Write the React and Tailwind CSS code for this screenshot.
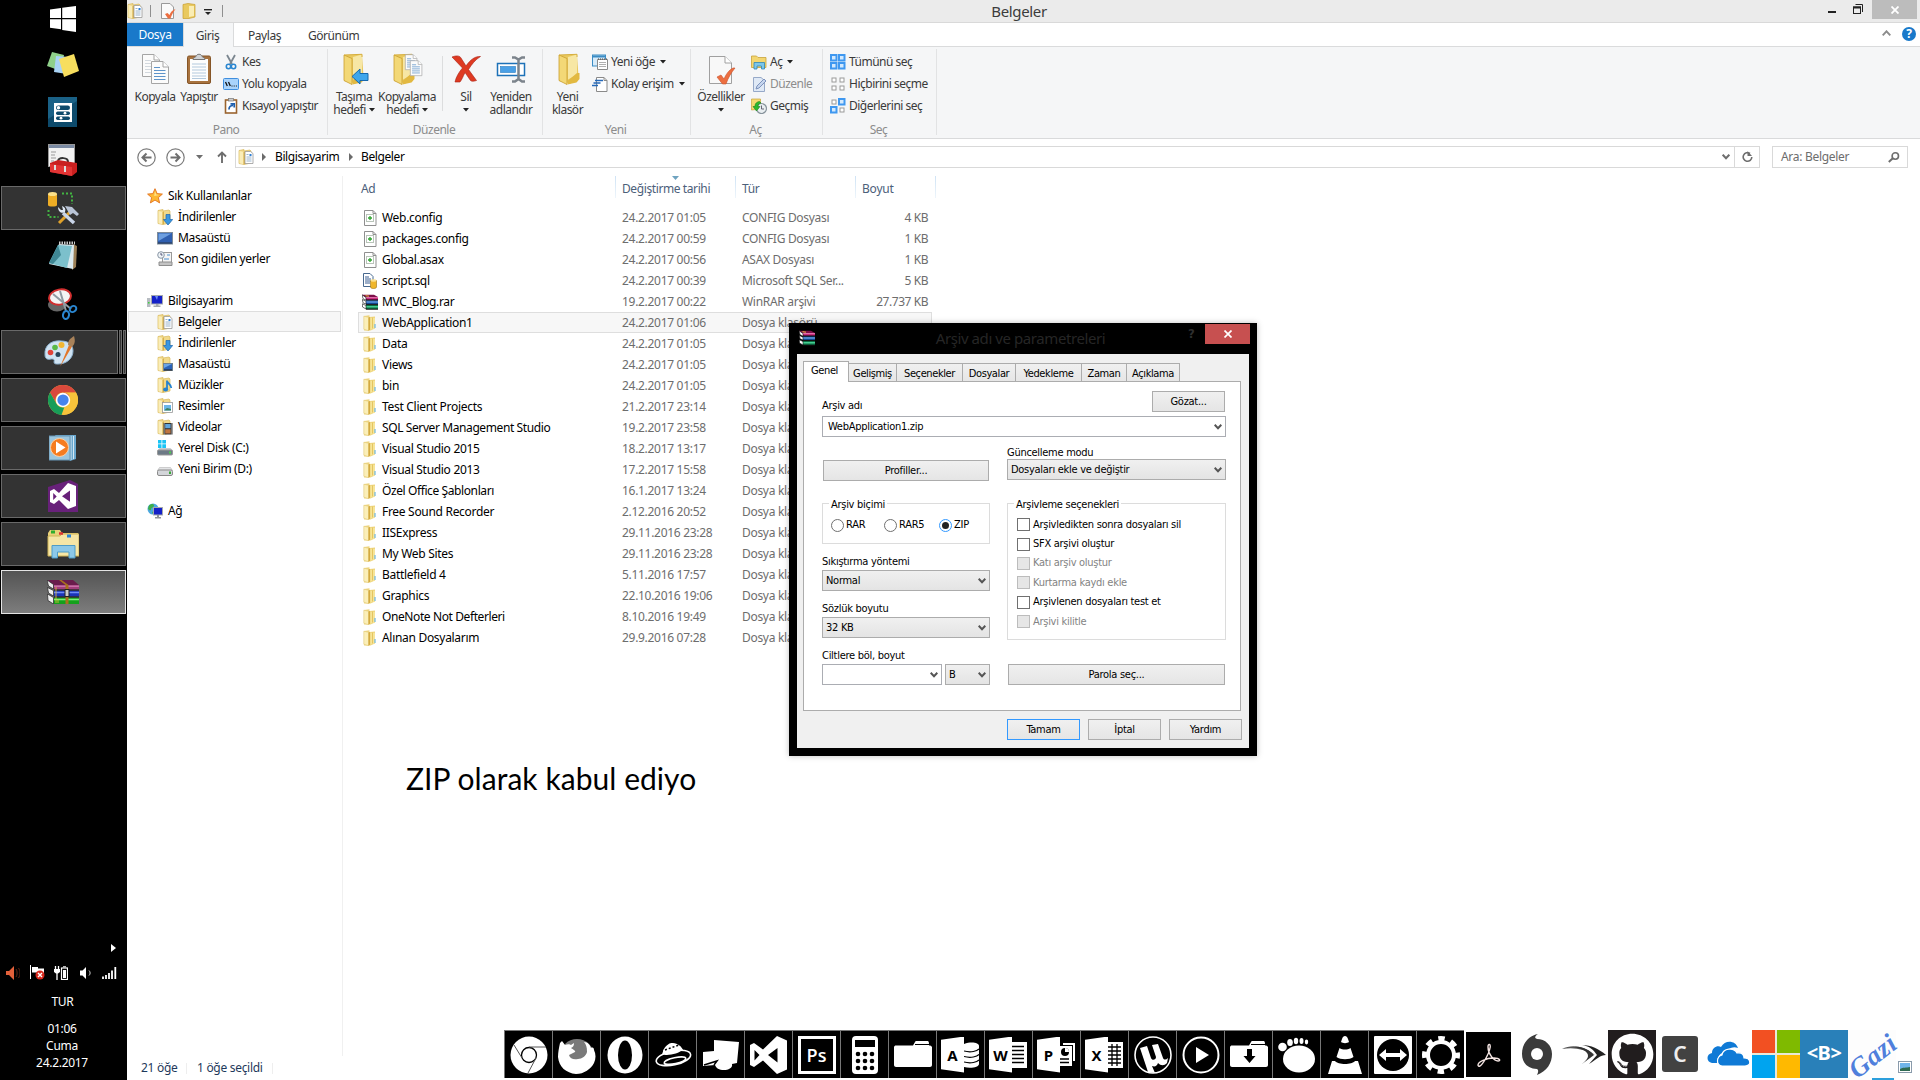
import React from "react";
import { FaGithub } from "react-icons/fa";

const Svg = ({ w = 16, h, vb, children, className = "" }) => (
  <svg width={w} height={h || w} viewBox={vb || `0 0 ${w} ${h || w}`} fill="none" className={`block shrink-0 ${className}`}>
    {children}
  </svg>
);

/* ---------- small icons ---------- */
const FolderBase = () => (
  <>
    <path d="M1 1.500 L6 .5 V2 L12 1 L13 2 V14 L6 15.500 L1 14.500Z" fill="#f1d98a" stroke="#d9b95c" strokeWidth=".7" />
    <path d="M1.500 2 L5.500 3 V15.300 L1.500 14.300Z" fill="#faedb8" />
    <path d="M5.500 3 L7 2.400 V15 L5.500 15.400Z" fill="#d8b04a" />
  </>
);
const FolderBelge = () => (
  <Svg>
    <FolderBase />
    <path d="M7 2.500H12.500L15 4.500V14.500H7Z" fill="#fff" stroke="#9a9a9a" strokeWidth=".8" />
    <path d="M8.500 5.500h2M8.500 8h5M8.500 10h5M8.500 12h5" stroke="#9bb4cc" />
    <rect x="11.500" y="5" width="2" height="2" fill="#2d7fd6" />
  </Svg>
);
const FolderDown = () => (
  <Svg>
    <FolderBase />
    <path d="M9 5.500h4v5h2.700L11 16 6.400 10.500H9Z" fill="#3b97e0" stroke="#1b66b0" strokeWidth=".7" />
  </Svg>
);
const FolderDesk = () => (
  <Svg>
    <FolderBase />
    <rect x="6.500" y="7.500" width="9" height="7" fill="#2a62b8" stroke="#6f8190" />
    <path d="M7 8h8l-8 4z" fill="#6aa5e8" />
    <path d="M7 14h8" stroke="#222" />
  </Svg>
);
const FolderMusic = () => (
  <Svg>
    <FolderBase />
    <path d="M10 3.500v8.500M10 4c1 3 4 3 4.300 7" stroke="#2582cf" strokeWidth="1.800" />
    <ellipse cx="8.600" cy="12.600" rx="2.500" ry="2" fill="#2582cf" />
  </Svg>
);
const FolderPic = () => (
  <Svg>
    <FolderBase />
    <rect x="5.500" y="4.500" width="10" height="10" fill="#fff" stroke="#9a9a9a" strokeWidth=".8" />
    <rect x="7" y="7" width="7" height="5.500" fill="#6bb6e8" />
    <path d="M7 12.500l3-2.500 4 1v1.500z" fill="#3c8061" />
  </Svg>
);
const FolderVideo = () => (
  <Svg>
    <FolderBase />
    <rect x="6.500" y="4" width="9" height="11.500" fill="#333" />
    <rect x="8.200" y="5" width="5.400" height="4.200" fill="#5fa4dc" />
    <rect x="8.200" y="10.300" width="5.400" height="4.200" fill="#c07540" />
    <path d="M7.300 4.500v11M14.700 4.500v11" stroke="#ddd" strokeWidth=".9" strokeDasharray="1 1" />
  </Svg>
);
const FolderRow = () => (
  <Svg>
    <path d="M2 1 L7.500 .3 V2 L13 1.500 V13.500 L8.500 15.500 H2Z" fill="#efd67f" />
    <path d="M1.800 1.200 L6.500 2.300 V15.700 L1.800 14.200Z" fill="#fbefb9" stroke="#e3c978" strokeWidth=".6" />
    <path d="M6.500 2.500 L8 2 V14.700 L6.500 15.700Z" fill="#d3a93f" />
    <path d="M8.500 3h4.500v10.500L8.500 14.500z" fill="#f6e498" />
    <path d="M10.500 2.500v11" stroke="#e4c560" />
    <path d="M13 9v4" stroke="#6fb6dc" strokeWidth="1.200" />
  </Svg>
);
const Star = () => (
  <Svg>
    <path d="M8 .7l2.100 4.900 5.300.5-4 3.500 1.200 5.300L8 12.100l-4.600 2.800 1.200-5.300-4-3.500 5.300-.5z" fill="#fdb833" stroke="#e2701c" strokeWidth=".9" />
    <path d="M8 3l1.200 3.500 3 .5-5 1z" fill="#ffe48a" />
  </Svg>
);
const Desk = () => (
  <Svg>
    <rect x=".5" y="2.500" width="15" height="11.500" fill="#2f5fb0" stroke="#7d8b99" />
    <path d="M1.500 3.500h13L1.500 11z" fill="#6d9fe0" />
    <path d="M1 13h14" stroke="#2b3748" />
  </Svg>
);
const Recent = () => (
  <Svg>
    <rect x="5.500" y="1.500" width="9" height="10" fill="#f5f5f5" stroke="#999" />
    <path d="M7 8h5M10 4h3" stroke="#4d90d0" />
    <path d="M2 11h13v3.500H2z" fill="#c4c4c4" stroke="#8e8e8e" />
    <circle cx="4" cy="4" r="3.300" fill="#eef3f7" stroke="#8a97a5" />
    <path d="M4 2v2h1.500" stroke="#557" />
  </Svg>
);
const Pc = () => (
  <Svg>
    <rect x="0" y="5" width="3.500" height="9" fill="#b7bcc2" />
    <rect x="1" y="9" width="1.500" height="1.500" fill="#3bd13b" />
    <rect x="4.500" y="2.500" width="11" height="8.500" fill="#1420c8" stroke="#a5a9ad" />
    <path d="M8 3h3l-1 4z" fill="#6c8cf4" />
    <path d="M9 11h2.500v1.500h2V14h-7v-1.500H9z" fill="#a5a9ad" />
  </Svg>
);
const DiskC = () => (
  <Svg>
    <path d="M1 0h3.500v3.500H1zM5.300 0H9v3.500H5.300zM1 4.300h3.500V8H1zM5.300 4.300H9V8H5.300z" fill="#19c4f5" />
    <path d="M2.500 8h11l2 2.500H.5z" fill="#c9ccd0" />
    <rect x=".5" y="10" width="15" height="5" rx="1" fill="#6d7a86" stroke="#999" />
    <rect x="12" y="11.500" width="2" height="2" fill="#4fd24f" />
  </Svg>
);
const DiskD = () => (
  <Svg>
    <path d="M2.500 6.500h11l2 3H.5z" fill="#e3e4e6" stroke="#b5b5b5" strokeWidth=".6" />
    <rect x=".5" y="9" width="15" height="5.500" rx="1.500" fill="#d4d6da" stroke="#8b8b8b" />
    <rect x="12" y="10.500" width="2" height="2.500" fill="#39a839" />
  </Svg>
);
const Net = () => (
  <Svg>
    <circle cx="6" cy="6" r="5.500" fill="#4aa7e0" />
    <path d="M2 2.500c2-2 5-2 5 0s-3 2-3 4-3 0-3-1zM5 9c2-1 3 1 1 2.500z" fill="#3fae49" />
    <rect x="6.500" y="4.500" width="9" height="7.500" fill="#1420c8" stroke="#a5a9ad" />
    <path d="M10 12h2v2h2v1.500H8V14h2z" fill="#8f9499" />
  </Svg>
);
const Conf = () => (
  <Svg>
    <path d="M2.500 .5H11L14 3.500V15.500H2.500Z" fill="#fff" stroke="#8f8f8f" />
    <path d="M11 .5V3.500H14" stroke="#8f8f8f" />
    <rect x="4.500" y="4.500" width="7" height="7" fill="#fff" stroke="#b9c4b9" />
    <path d="M8 6v4M6 8h4" stroke="#2fa32f" strokeWidth="1.300" />
  </Svg>
);
const Sql = () => (
  <Svg>
    <path d="M1.500 .5H8L11 3.500V13.500H1.500Z" fill="#fff" stroke="#47688e" />
    <path d="M3 4h4M3 6h6M3 8h6M3 10h5" stroke="#3a5f92" />
    <path d="M8.500 7.500v6.500c0 2 6 2 6 0V7.500z" fill="#f0b62a" stroke="#9c7414" strokeWidth=".6" />
    <ellipse cx="11.500" cy="7.500" rx="3" ry="1.300" fill="#fbe08c" />
  </Svg>
);
const Rar = ({ s = 16 }) => (
  <Svg w={s} vb="0 0 16 16">
    <path d="M0 .8h12L16 3V6H4z" fill="#7c0f48" />
    <path d="M4 3.200h12V5.500H4z" fill="#c8287c" />
    <path d="M4 3.600h12" stroke="#ee8cc0" strokeWidth=".8" />
    <path d="M4 6.200h12v4H4z" fill="#12458f" />
    <path d="M4 8h12" stroke="#69a8f0" strokeWidth="1.300" />
    <path d="M4 10.800h12V15H4z" fill="#0b6a40" />
    <path d="M4 12.800h12" stroke="#4fe0a0" strokeWidth="1.300" />
    <path d="M0 .8l4 2.700v2.700L1 4.700zM.3 5.500L4 7.200v2.900L1 8.800zM.3 9.800L4 11.500V15l-3.500-2z" fill="#fff" stroke="#111" strokeWidth=".6" />
    <path d="M4 6h12M4 10.500h12M4 15.300h12" stroke="#111" strokeWidth=".9" />
    <path d="M3.500 1.700l3.500.5" stroke="#e9b93a" />
  </Svg>
);
const RarBig = () => (
  <Svg w={32} h={24}>
    <path d="M1 0h25l6 5v4H7z" fill="#6a1c4c" />
    <path d="M7 5h25v4.500H7z" fill="#a33d7d" />
    <path d="M7 6.200h25" stroke="#d989b8" />
    <path d="M7 10.500h25v6H7z" fill="#1b34b8" />
    <path d="M7 12.500h25" stroke="#6d8cf8" strokeWidth="1.500" />
    <path d="M7 17.500h25V24H7z" fill="#14a01c" />
    <path d="M7 19.500h25" stroke="#7df07d" strokeWidth="1.500" />
    <path d="M0 0l6.500 4.500v4.500L1.500 6zM.5 7.500l6 3v5.500l-5-3zM.5 14l6 3.500V24l-5.500-3.500z" fill="#eee" stroke="#222" strokeWidth=".7" />
    <path d="M7 10h25M7 17h25" stroke="#111" />
    <path d="M12 0h2.500l7 5v19h-3V5z" fill="#a8701e" />
    <path d="M18 9.500h4v7h-4z" fill="#ccc" stroke="#222" />
    <path d="M9 7v16M11 19v4" stroke="#e9c23a" strokeWidth=".8" />
  </Svg>
);

/* ---------- ribbon icons ---------- */
const Page = ({ x, y, blue }) => (
  <g transform={`translate(${x} ${y})`}>
    <path d="M.5 .5H12L17.500 6V22.500H.5Z" fill="#fbfbfb" stroke="#a5a5a5" />
    <path d="M12 .5V6H17.500" stroke="#a5a5a5" fill="#fff" />
    <path d="M3 6.500h6M3 9.500h11.500M3 12.500h11.500M3 15.500h11.500M3 18.500h11.500" stroke={blue ? "#5d93c9" : "#d2d8de"} strokeWidth="1.100" />
  </g>
);
const CopyBig = () => <Svg w={32}><Page x={3} y={1} /><Page x={12} y={8} blue /></Svg>;
const PasteBig = () => (
  <Svg w={32}>
    <rect x="4.500" y="3" width="23" height="27.500" rx="1.500" fill="#a8733f" stroke="#855527" />
    <rect x="7" y="6" width="18" height="22" fill="#fdfdfd" />
    <path d="M9 11h14M9 14h14M9 17h14M9 20h14M9 23h14M9 25.500h14" stroke="#b3c9dd" />
    <path d="M10 6.500c0-2 2-2 3-3 .5-3 5.500-3 6 0 1 1 3 1 3 3z" fill="#d0d3d6" stroke="#777" />
  </Svg>
);
const Fold = ({ x = 4 }) => (
  <g transform={`translate(${x} 0)`}>
    <path d="M2 2l18-.5 1.500 22-8 7L2 28z" fill="#e9c95f" />
    <path d="M11 4l9-2.500v20l-9 5z" fill="#f7e7a4" />
    <path d="M2 2l8 3.500v26L2 27.500z" fill="#f3d876" stroke="#c99e2e" strokeWidth=".8" />
    <path d="M2 2l18-.7V4" stroke="#d6ae3c" strokeWidth="1" />
    <path d="M20 20h2.500v6l-3 3.500-9 2V28z" fill="#e2b941" />
  </g>
);
const MoveBig = () => (
  <Svg w={32}>
    <Fold />
    <path d="M14 23.500L22 16v4.500h8v7h-8V31z" fill="#3ea6ec" stroke="#1568ad" />
  </Svg>
);
const CopyToBig = () => (
  <Svg w={32}>
    <Fold x={1} />
    <g transform="translate(14 0) scale(.68)"><Page x={0} y={2} blue /></g>
    <g transform="translate(19 6) scale(.68)"><Page x={0} y={2} blue /></g>
  </Svg>
);
const DelBig = () => (
  <Svg w={32}>
    <path d="M2 4c5-2 8-1 9 1l5 8c4-6 9-10 14.500-9.500-5 3-9 8-12 13l8 11c-3 1-5 1-6 0l-5.500-8c-2 4-3 7-5 9.500H5c1-5 4-10 7.500-14z" fill="#de3a22" stroke="#a81f10" strokeWidth=".6" />
  </Svg>
);
const RenameBig = () => (
  <Svg w={32}>
    <rect x="2.500" y="10.500" width="27" height="12" fill="#fff" stroke="#1d72b8" strokeWidth="1.500" />
    <rect x="5.500" y="13.500" width="15" height="6" fill="#4aa0e6" stroke="#2b7cc0" strokeWidth=".6" />
    <path d="M17 4.500h3l3.500 2 3.500-2h3M23.500 6v20M17 28.500h3l3.500-2.500 3.500 2.500h3" stroke="#7c848c" strokeWidth="2.500" />
  </Svg>
);
const NewFolderBig = () => <Svg w={32}><Fold x={5} /></Svg>;
const PropsBig = () => (
  <Svg w={32}>
    <path d="M4.500 3.500H20L26.500 10V30.500H4.500Z" fill="#f8f8f8" stroke="#a0a0a0" />
    <path d="M20 3.500V10H26.500" fill="#fff" stroke="#a0a0a0" />
    <path d="M12 24l4-2 3 4c2-5 5-9 9-11h2c-4 5-7 10-9 16h-3.500z" fill="#ec6e40" stroke="#c9512a" strokeWidth=".6" />
  </Svg>
);
const Cut = () => (
  <Svg>
    <path d="M4 1l5 9M12 1L7 10" stroke="#7b868f" strokeWidth="1.800" />
    <circle cx="5.500" cy="12.500" r="2.200" stroke="#2a86d0" strokeWidth="1.600" />
    <circle cx="10.500" cy="12.500" r="2.200" stroke="#2a86d0" strokeWidth="1.600" />
  </Svg>
);
const PathI = () => (
  <Svg>
    <rect x=".5" y="2.500" width="15" height="11" rx="1" fill="#a9d3fb" stroke="#3f8ede" />
    <path d="M2.500 6l1.800 4M5.500 6l1.800 4" stroke="#111" strokeWidth="1.300" />
    <path d="M8.500 10h1M10.700 10h1M12.900 10h1" stroke="#111" strokeWidth="1.200" />
  </Svg>
);
const Shortcut = () => (
  <Svg>
    <rect x="2.500" y="2" width="11" height="13" fill="#fff" stroke="#9a642f" strokeWidth="1.600" />
    <rect x="5.500" y=".5" width="5" height="2.500" fill="#ccc" stroke="#777" strokeWidth=".7" />
    <path d="M6 11.500c0-3 1.500-4 4-4M7.500 5.800h3.700v3.700" stroke="#1d5fae" strokeWidth="1.700" />
  </Svg>
);
const NewItem = () => (
  <Svg>
    <rect x=".5" y="1" width="13" height="11" fill="#d7ebf9" stroke="#3b8cc4" />
    <path d="M1 2.500h12" stroke="#3b8cc4" strokeWidth="2" />
    <path d="M5.500 5.500h10v10h-10z" fill="#fff" stroke="#8a8a8a" />
    <path d="M7 8.500h7M7 10.500h7M7 12.500h7" stroke="#b0b0b0" />
    <path d="M6 5h9" stroke="#444" strokeDasharray="1 1" />
  </Svg>
);
const Easy = () => (
  <Svg>
    <path d="M4.500 1.500H12L15 4.500V15.500H4.500Z" fill="#fff" stroke="#8a8a8a" />
    <path d="M12 1.500V4.500H15" stroke="#8a8a8a" />
    <path d="M3 4.500h8M1.500 7h7M0 9.500h6" stroke="#2468b8" strokeWidth="1.400" />
  </Svg>
);
const OpenI = () => (
  <Svg>
    <path d="M.5 2h5l1.500 1.500h8v10H.5z" fill="#f3d670" stroke="#c8a33b" strokeWidth=".8" />
    <path d="M3 15V8.500h10.500V15h-3v-3h-4.500v3z" fill="#7cc6ea" stroke="#2f86b8" strokeWidth=".8" />
  </Svg>
);
const EditI = () => (
  <Svg>
    <path d="M2.500 1.500H10L13.500 4.500V15.500H2.500Z" fill="#dfe9f6" stroke="#96a9c8" />
    <path d="M5 13l1-3 7-7 2 2-7 7z" fill="#c5d5ee" stroke="#7d93bd" />
  </Svg>
);
const HistI = () => (
  <Svg>
    <path d="M.5 1h9v10l-9 1z" fill="#f5d970" stroke="#c8a33b" strokeWidth=".7" />
    <circle cx="10.500" cy="10.500" r="5" fill="#e9eef1" stroke="#87939c" strokeWidth="1.200" />
    <path d="M10.500 7.500v3.500h2.500" stroke="#667" />
    <path d="M8.500 3.500C5 4 4 6 4 8.500H2L5.500 13 9 8.500H7c0-2 1-3 3-3.500z" fill="#2eb82e" stroke="#178217" strokeWidth=".6" />
  </Svg>
);
const Sq = ({ x, y, on }) => on ? (
  <rect x={x + 1} y={y + 1} width="5.500" height="5.500" fill="#d3e9fd" stroke="#3f98f0" strokeWidth="2" />
) : (
  <rect x={x + 2} y={y + 2} width="4" height="4" fill="#fff" stroke="#9a9a9a" strokeWidth="1" />
);
const Sel = ({ m }) => (
  <Svg>
    <Sq x={0} y={0} on={m[0]} /><Sq x={8} y={0} on={m[1]} /><Sq x={0} y={8} on={m[2]} /><Sq x={8} y={8} on={m[3]} />
  </Svg>
);

const Tri = () => <Svg w={6} h={4}><path d="M0 0h6L3 3.500z" fill="#222" /></Svg>;

const Big = ({ icon, l1, l2, arrow, className }) => (
  <div className={`flex flex-col items-center pt-[6px] ${className}`}>
    {icon}
    <div className="mt-[5px] flex h-[13px] items-center leading-[13px] whitespace-nowrap">{l1}</div>
    <div className="flex h-[13px] items-center gap-[3px] leading-[13px] whitespace-nowrap">{l2}{arrow && <Tri />}</div>
  </div>
);
const Small = ({ icon, children, arrow, dim }) => (
  <div className={`flex h-[22px] items-center gap-[3px] whitespace-nowrap ${dim ? "text-[#8d8d8d]" : ""}`}>
    {icon}<span>{children}</span>{arrow && <span className="ml-[2px]"><Tri /></span>}
  </div>
);
const Group = ({ name, children, className }) => (
  <div className={`flex h-[91px] flex-col ${className}`}>
    <div className="flex h-[73px]">{children}</div>
    <div className="h-[18px] pr-[2px] text-center leading-[19px] text-[#8c8c8c]">{name}</div>
  </div>
);
const Sep = () => <div className="mt-[2px] h-[86px] w-px bg-[#e2e3e4]" />;

/* ---------- taskbar ---------- */
const TaskIcons = {
  sticky: <Svg w={32} h={26}><path d="M5 1l12 3-3 16L0 15z" fill="#8fd08a" /><path d="M9 5l13 1-2 17-13-2z" fill="#a9d3f5" /><path d="M12 8l15-5 5 17-15 6z" fill="#f7de5e" /></Svg>,
  panel: <Svg w={29} h={30}><rect width="29" height="30" fill="#0d4a6b" /><path d="M0 30V22L29 4V0H0z" fill="#1a6186" /><rect x="6" y="6" width="18" height="19" fill="#fff" /><rect x="8" y="8.500" width="14" height="4.500" rx="2.200" fill="#0d4a6b" /><rect x="8" y="14.500" width="14" height="3.500" rx="1.700" fill="#0d4a6b" /><rect x="8" y="19.500" width="14" height="3.500" rx="1.700" fill="#0d4a6b" /><circle cx="10.500" cy="10.700" r="1.700" fill="#fff" /><circle cx="17" cy="16.200" r="1.400" fill="#fff" /><circle cx="13" cy="21.200" r="1.400" fill="#fff" /></Svg>,
  toolbox: <Svg w={30} h={32}><rect x=".5" y=".5" width="26" height="22" fill="#f2f2f2" stroke="#999" /><path d="M1 2.500h25" stroke="#7a8aa3" strokeWidth="3" /><path d="M3 8h5M3 11h4M3 14h5M3 17h3" stroke="#999" /><path d="M10 17c1-4 10-4 10 1" stroke="#333" strokeWidth="2" /><path d="M2 19l8-3 19 3v9l-5 4-22-4z" fill="#c91f1f" /><path d="M2 20l22 3v9L2 28z" fill="#e23434" /><path d="M7 21v5M17 22v6" stroke="#ddd" strokeWidth="2" /></Svg>,
  tools: <Svg w={32} h={34}><path d="M1 3v11c0 2 9 2 9 0V3z" fill="#eead25" /><ellipse cx="5.500" cy="3" rx="4.500" ry="2" fill="#fce18a" /><path d="M15 2.500h10V13M1.500 19v7h10" stroke="#43b543" strokeWidth="2" strokeDasharray="2 2" /><path d="M12 32L25 19" stroke="#dfa12a" strokeWidth="3" /><path d="M16 22l11 10" stroke="#c9d5e8" strokeWidth="3.500" /><path d="M11 16c0 5 4 7 7 5 1-3 0-5-3-6l1 4-2 0z" fill="#dce6f3" /><path d="M18 15l7 1 7 7-2 2-4-3-3 2z" fill="#b9c4d6" /></Svg>,
  notepad: <Svg w={32} h={30}><path d="M26 3l4 2-1 21-4 3z" fill="#9a7e55" /><path d="M12 3l15 1-1 24-24-5z" fill="#dbe9ee" /><path d="M11 4l14 1-5 22L2 22z" fill="#7cc0cc" /><path d="M11 4l3 10-8 9-4-1z" fill="#3f8794" /><path d="M12 2h16" stroke="#ccc" strokeWidth="3" strokeDasharray="1.500 1" /></Svg>,
  snip: <Svg w={30} h={32}><ellipse cx="9" cy="17" rx="9" ry="6.500" fill="#666" /><ellipse cx="12" cy="9" rx="11" ry="7.500" fill="#f4f4f4" stroke="#d22f2f" strokeWidth="2" transform="rotate(-10 12 9)" /><path d="M5 6l18 15M12 3l6 20" stroke="#909aa2" strokeWidth="2" /><ellipse cx="25" cy="21" rx="3.500" ry="2.800" stroke="#2a86d0" strokeWidth="2" transform="rotate(-35 25 21)" /><ellipse cx="18" cy="27" rx="3" ry="4" stroke="#2a86d0" strokeWidth="2" transform="rotate(10 18 27)" /></Svg>,
  paint: <Svg w={32} h={32}><path d="M1 19C0 9 8 4 17 5c9 0 12 5 12 10 0 7-6 13-15 13-2 0-4 0-4-2 1-3-1-3-3-3-3 1-6 0-6-4z" fill="#cfe3f3" stroke="#8fb3d0" /><circle cx="6.500" cy="16.500" r="2.800" fill="#e0433a" /><circle cx="11" cy="11.500" r="2.800" fill="#58b947" /><circle cx="17.500" cy="9" r="3" fill="#f2b632" /><circle cx="14" cy="18.500" r="2.500" fill="#27455c" /><path d="M16 31l9-22 3 1.500z" fill="#e2762a" /><path d="M24 9c0-5 2-6 6-9 1.500 5 1 8-2 11z" fill="#a8825a" /></Svg>,
  chrome: <Svg w={30} vb="0 0 48 48"><circle cx="24" cy="24" r="24" fill="#f7c33b" /><path d="M3.200 12A24 24 0 0 1 44.800 12H24A12 12 0 0 0 13.600 30z" fill="#d9493c" /><path d="M3.200 12L13.600 30A12 12 0 0 0 26 35.800L21.500 48A24 24 0 0 1 3.200 12z" fill="#189d58" /><path d="M44.800 12H24v12z" fill="#d9493c" /><path d="M44.800 12H24A12 12 0 0 1 34.400 30L24 48A24 24 0 0 0 44.800 12z" fill="#f7c33b" /><circle cx="24" cy="24" r="11.500" fill="#fff" /><circle cx="24" cy="24" r="9" fill="#4684ee" /></Svg>,
  media: <Svg w={27} h={26}><path d="M6 0h21v24l-6 2z" fill="#6aa8cf" /><path d="M24.500 1v23M22 1v24" stroke="#d5e8f4" /><rect x="0" y="1" width="21" height="24" fill="#9cc6de" stroke="#6696b5" /><circle cx="10.500" cy="12.500" r="9" fill="#f57c20" stroke="#fbd0a6" /><path d="M7 6.500l9.500 6L7 18.500z" fill="#fff" /></Svg>,
  vs: <Svg w={30} h={32}><path d="M0 7l22-7 8 4v28H0z" fill="#68217a" /><path d="M20 3l8 3v20l-8 3-9-9-5 4-4-2V11l4-2 5 4zM22 10.500l-8 5.800 8 5.500zM5.200 13v7l3.500-3.500z" fill="#fff" fillRule="evenodd" /></Svg>,
  explorer: <Svg w={32} h={30}><path d="M1 4l2-3h10l2 3h16v22H1z" fill="#e9d27a" /><path d="M1 7h12l2-2h17v22H1z" fill="#f6e6a6" stroke="#cfb457" /><path d="M4 3h4" stroke="#2fae2f" strokeWidth="3" /><path d="M12 4.500h4" stroke="#d33" strokeWidth="2.500" /><path d="M20 7h4" stroke="#2b86d8" strokeWidth="3" /><path d="M5 29V16.500h23V29h-6v-6H10.500v6z" fill="#8cc8e8" stroke="#4f9cc6" /></Svg>,
};
const Task = ({ children, open, active, stack }) => (
  <div className="flex h-[44px] w-[125px]">
    <div className={`flex h-[44px] flex-1 items-center justify-center ${active ? "border border-[#e4e4e4] bg-linear-to-b from-[#545454] to-[#7d7d7d]" : open ? "border border-[#696969] bg-[#333]" : ""} ${stack ? "" : "pr-[2px]"}`}>
      {children}
    </div>
    {stack && <><div className="ml-px w-[3px] border border-[#696969] bg-[#333]" /><div className="ml-px w-[3px] border border-[#696969] bg-[#333]" /></>}
  </div>
);

const Taskbar = () => (
  <div className="flex h-[1080px] w-[127px] shrink-0 flex-col bg-black pl-px text-white">
    <div className="flex h-[42px] justify-center pt-[6px] pr-[3px]">
      <Svg w={26} h={26}><path d="M0 3.600L11 2v10H0zM12.200 1.800L26 0v12H12.200zM0 13.200h11v10L0 21.700zM12.200 13.200H26V26l-13.800-2z" fill="#fff" /></Svg>
    </div>
    <div className="flex flex-col gap-1">
      <Task>{TaskIcons.sticky}</Task>
      <Task>{TaskIcons.panel}</Task>
      <Task>{TaskIcons.toolbox}</Task>
      <Task open>{TaskIcons.tools}</Task>
      <Task>{TaskIcons.notepad}</Task>
      <Task>{TaskIcons.snip}</Task>
      <Task open stack>{TaskIcons.paint}</Task>
      <Task open>{TaskIcons.chrome}</Task>
      <Task open>{TaskIcons.media}</Task>
      <Task open>{TaskIcons.vs}</Task>
      <Task open>{TaskIcons.explorer}</Task>
      <Task active><RarBig /></Task>
    </div>
    <div className="mt-[330px] flex justify-end pr-[11px]"><Svg w={5} h={8}><path d="M0 0l5 4-5 4z" fill="#fff" /></Svg></div>
    <div className="mt-[13px] flex h-[15px] items-center pl-[5px]">
      <Svg w={14} h={14}><path d="M0 5h3l5-5v14L3 9H0z" fill="#e2603a" /><path d="M10 3c1.500 2 1.500 6 0 8M12.500 2c2 3 2 7 0 10" stroke="#5a2415" /></Svg>
      <Svg w={15} h={15} className="ml-[10px]"><path d="M.5 0v14" stroke="#fff" /><path d="M2 2h6v1.500h6V9H8V7.500H2z" fill="#fff" /><circle cx="10" cy="10" r="4.500" fill="#d8281c" /><path d="M8 8l4 4M12 8l-4 4" stroke="#fff" strokeWidth="1.400" /></Svg>
      <Svg w={14} h={14} className="ml-[9px]"><path d="M1.500 0v3M4.500 0v3M3 6v8" stroke="#fff" strokeWidth="1.300" /><path d="M0 3h6v3l-2 1.500H2L0 6z" fill="#fff" /><rect x="7.500" y="2" width="6" height="11.500" stroke="#fff" strokeWidth="1.200" /><path d="M9 .8h3" stroke="#fff" /><rect x="9" y="4" width="3" height="8" fill="#fff" /></Svg>
      <Svg w={12} h={14} className="ml-[12px]"><path d="M0 4.500h2.500L6 1v12L2.500 9.500H0z" fill="#fff" /><path d="M9 4.500c1.500 1.500 1.500 3.500 0 5" stroke="#ccc" /></Svg>
      <Svg w={15} h={12} className="ml-[10px]"><path d="M1 12V9.500M4 12V8M7 12V6M10 12V3.500M13.300 12V0" stroke="#fff" strokeWidth="1.800" /></Svg>
    </div>
    <div className="mt-[13px] pr-[3px] text-center leading-[17px]">TUR</div>
    <div className="mt-[10px] pr-[4px] text-center leading-[17px]"><div>01:06</div><div>Cuma</div><div>24.2.2017</div></div>
  </div>
);

/* ---------- explorer ---------- */
const NavRow = ({ icon, children, top, sel }) => (
  <div className={`flex h-[21px] w-[213px] items-center whitespace-nowrap ${top ? "gap-[5px] pl-[19px]" : "gap-[5px] pl-[29px]"} ${sel ? "bg-[#f7f7f7] outline outline-[#dedede] -outline-offset-1" : ""}`}>
    {icon}<span>{children}</span>
  </div>
);

const files = [
  [Conf, "Web.config", "24.2.2017 01:05", "CONFIG Dosyası", "4 KB"],
  [Conf, "packages.config", "24.2.2017 00:59", "CONFIG Dosyası", "1 KB"],
  [Conf, "Global.asax", "24.2.2017 00:56", "ASAX Dosyası", "1 KB"],
  [Sql, "script.sql", "24.2.2017 00:39", "Microsoft SQL Ser...", "5 KB"],
  [Rar, "MVC_Blog.rar", "19.2.2017 00:22", "WinRAR arşivi", "27.737 KB"],
  [FolderRow, "WebApplication1", "24.2.2017 01:06"],
  [FolderRow, "Data", "24.2.2017 01:05"],
  [FolderRow, "Views", "24.2.2017 01:05"],
  [FolderRow, "bin", "24.2.2017 01:05"],
  [FolderRow, "Test Client Projects", "21.2.2017 23:14"],
  [FolderRow, "SQL Server Management Studio", "19.2.2017 23:58"],
  [FolderRow, "Visual Studio 2015", "18.2.2017 13:17"],
  [FolderRow, "Visual Studio 2013", "17.2.2017 15:58"],
  [FolderRow, "Özel Office Şablonları", "16.1.2017 13:24"],
  [FolderRow, "Free Sound Recorder", "2.12.2016 20:52"],
  [FolderRow, "IISExpress", "29.11.2016 23:28"],
  [FolderRow, "My Web Sites", "29.11.2016 23:28"],
  [FolderRow, "Battlefield 4", "5.11.2016 17:57"],
  [FolderRow, "Graphics", "22.10.2016 19:06"],
  [FolderRow, "OneNote Not Defterleri", "8.10.2016 19:49"],
  [FolderRow, "Alınan Dosyalarım", "29.9.2016 07:28"],
];

const TitleBar = () => (
  <div className="flex h-[23px] border-b border-[#d9d9d9] bg-[#ebebeb]">
    <div className="flex w-[110px] items-center pb-[1px]">
      <FolderBelge />
      <div className="ml-[7px] h-[12px] w-px bg-[#8f8f8f]" />
      <Svg w={16} className="ml-[10px]"><path d="M.5 .5H9L12.500 4V15.500H.5Z" fill="#fafafa" stroke="#999" /><path d="M4 11l2.500-1 2 2c1-3 3-5 6-6-2 3-4 6-5 9.500H7z" fill="#ec6e40" /></Svg>
      <Svg w={16} className="ml-[5px]"><path d="M1 1.500L6 .5l7 1V14l-6 1.500H1z" fill="#e9c95f" stroke="#c99e2e" strokeWidth=".7" /><path d="M7 3h5v10l-5 1z" fill="#faedb4" /></Svg>
      <Svg w={8} h={7} className="ml-[6px] mt-[4px]"><path d="M0 .7h8" stroke="#222" strokeWidth="1.400" /><path d="M1 3h6L4 6z" fill="#222" /></Svg>
      <div className="ml-[10px] h-[12px] w-px shrink-0 bg-[#8f8f8f]" />
    </div>
    <div className="flex-1 pr-[27px] text-center text-[15px] leading-[23px] tracking-[-0.35px] text-[#3c3c3c]">Belgeler</div>
    <div className="flex">
      <Svg w={8} h={3} className="mt-[11px]"><path d="M0 1h8" stroke="#222" strokeWidth="2" /></Svg>
      <Svg w={11} h={11} className="ml-[17px] mt-[4px]"><path d="M2.500 .5H9.500V8" stroke="#222" /><rect x=".5" y="3" width="7" height="6.500" stroke="#222" /><path d="M0 3.500h8" stroke="#222" strokeWidth="2" /></Svg>
      <div className="mr-[3px] ml-[8px] flex h-[19px] w-[45px] items-center justify-center bg-[#bcbcbc]">
        <Svg w={8} h={8}><path d="M.5 .5l7 7M7.500 .5l-7 7" stroke="#fff" strokeWidth="1.800" /></Svg>
      </div>
    </div>
  </div>
);

const Ribbon = () => (
  <>
    <div className="flex h-[24px] border-b border-[#dadbdc] tracking-[-0.45px] text-[#3a3a3a]">
      <div className="h-[23px] w-[56px] bg-[#1979ca] text-center leading-[24px] tracking-[-0.3px] text-white">Dosya</div>
      <div className="h-[24px] w-[51px] border-x border-[#dadbdc] bg-[#f5f6f7] pr-[2px] text-center leading-[26px]">Giriş</div>
      <div className="ml-[14px] w-[60px] leading-[26px]">Paylaş</div>
      <div className="leading-[26px]">Görünüm</div>
      <div className="flex flex-1 items-start justify-end gap-[11px] pt-[4px] pr-[4px]">
        <Svg w={9} h={6} className="mt-[3px]"><path d="M.7 5.300l3.800-4 3.800 4" stroke="#8c8c8c" strokeWidth="1.900" /></Svg>
        <div className="flex h-[14px] w-[14px] items-center justify-center rounded-full bg-[#1979ca] text-[12px] font-bold text-white">?</div>
      </div>
    </div>
    <div className="flex h-[92px] border-b border-[#d9dadb] bg-[#f5f6f7] tracking-[-0.5px] text-[#3a3a3a]">
      <Group name="Pano" className="w-[200px]">
        <Big className="ml-[5px] w-[46px]" icon={<CopyBig />} l1="Kopyala" />
        <Big className="w-[42px]" icon={<PasteBig />} l1="Yapıştır" />
        <div className="ml-[3px] pt-[4px]"><Small icon={<Cut />}>Kes</Small><Small icon={<PathI />}>Yolu kopyala</Small><Small icon={<Shortcut />}>Kısayol yapıştır</Small></div>
      </Group>
      <Sep />
      <Group name="Düzenle" className="w-[214px]">
        <Big className="ml-[3px] w-[46px]" icon={<MoveBig />} l1="Taşıma" l2="hedefi" arrow />
        <Big className="w-[60px]" icon={<CopyToBig />} l1="Kopyalama" l2="hedefi" arrow />
        <div className="mt-[9px] ml-[5px] h-[55px] w-px bg-[#dcddde]" />
        <Big className="ml-[3px] w-[40px]" icon={<DelBig />} l1="Sil" arrow />
        <Big className="w-[50px]" icon={<RenameBig />} l1="Yeniden" l2="adlandır" />
      </Group>
      <Sep />
      <Group name="Yeni" className="w-[147px]">
        <Big className="ml-[3px] w-[43px]" icon={<NewFolderBig />} l1="Yeni" l2="klasör" />
        <div className="ml-[3px] pt-[4px]"><Small icon={<NewItem />} arrow>Yeni öğe</Small><Small icon={<Easy />} arrow>Kolay erişim</Small></div>
      </Group>
      <Sep />
      <Group name="Aç" className="w-[131px]">
        <Big className="ml-[3px] w-[54px]" icon={<PropsBig />} l1="Özellikler" arrow />
        <div className="ml-[3px] pt-[4px]"><Small icon={<OpenI />} arrow>Aç</Small><Small icon={<EditI />} dim>Düzenle</Small><Small icon={<HistI />}>Geçmiş</Small></div>
      </Group>
      <Sep />
      <Group name="Seç" className="w-[113px]">
        <div className="ml-[7px] pt-[4px]"><Small icon={<Sel m={[1, 1, 1, 1]} />}>Tümünü seç</Small><Small icon={<Sel m={[0, 0, 0, 0]} />}>Hiçbirini seçme</Small><Small icon={<Sel m={[0, 1, 1, 0]} />}>Diğerlerini seç</Small></div>
      </Group>
      <Sep />
    </div>
  </>
);

const Crumb = () => <Svg w={4} h={8}><path d="M0 0l4 4-4 4z" fill="#6b6b6b" /></Svg>;
const AddressBar = () => (
  <div className="flex h-[37px] pt-[7px] pr-[12px] pl-[10px]">
    <div className="flex h-[22px] w-[98px] items-center">
      <Svg w={19}><circle cx="9.500" cy="9.500" r="8.700" stroke="#7b7b7b" strokeWidth="1.200" /><path d="M14.500 9.500H5.500M9.500 5.500l-4 4 4 4" stroke="#6e6e6e" strokeWidth="2" /></Svg>
      <Svg w={19} className="ml-[10px]"><circle cx="9.500" cy="9.500" r="8.700" stroke="#7b7b7b" strokeWidth="1.200" /><path d="M4.500 9.500h9M9.500 5.500l4 4-4 4" stroke="#6e6e6e" strokeWidth="2" /></Svg>
      <Svg w={7} h={4} className="ml-[11px]"><path d="M0 0h7L3.500 4z" fill="#6e6e6e" /></Svg>
      <Svg w={10} h={12} className="ml-[14px]"><path d="M5 12V2M1 5.500l4-4 4 4" stroke="#6e6e6e" strokeWidth="1.900" /></Svg>
    </div>
    <div className="flex h-[22px] w-[1525px] items-center border border-[#d9d9d9] pl-[2px] text-black">
      <FolderBelge />
      <div className="ml-[8px]"><Crumb /></div>
      <div className="ml-[9px] w-[66px] tracking-[-0.4px]">Bilgisayarim</div>
      <div className="ml-[8px]"><Crumb /></div>
      <div className="ml-[8px] flex-1 tracking-[-0.4px]">Belgeler</div>
      <Svg w={8} h={6} className="mr-[3px]"><path d="M.7 .7l3.300 3.500 3.300-3.500" stroke="#6e6e6e" strokeWidth="2" /></Svg>
      <div className="ml-[1px] flex h-[20px] w-[25px] items-center justify-center border-l border-[#d9d9d9]">
        <Svg w={11} h={12}><path d="M8 2.500A4.300 4.300 0 1 0 9.800 6" stroke="#6e6e6e" strokeWidth="1.600" /><path d="M5.500 0v5H10z" fill="#6e6e6e" /></Svg>
      </div>
    </div>
    <div className="ml-[12px] flex h-[22px] w-[136px] items-center justify-between border border-[#d9d9d9] pr-[7px] pl-[8px] text-[#6d6d6d]">
      <span>Ara: Belgeler</span>
      <Svg w={12} h={11}><circle cx="7.300" cy="4" r="3.200" stroke="#6e6e6e" strokeWidth="1.600" /><path d="M4.800 6.300L.8 10" stroke="#6e6e6e" strokeWidth="2" /></Svg>
    </div>
  </div>
);

const ColSep = () => <div className="h-[22px] w-px bg-linear-to-b from-[#cfe3f5] to-[#eef5fb]" />;

const Explorer = () => (
  <div className="flex h-[1080px] flex-1 flex-col bg-white">
    <TitleBar />
    <Ribbon />
    <AddressBar />
    <div className="flex h-[880px]">
      <div className="w-[215px] pt-[9px] pl-px tracking-[-0.35px] text-black">
        <NavRow top icon={<Star />}>Sık Kullanılanlar</NavRow>
        <NavRow icon={<FolderDown />}>İndirilenler</NavRow>
        <NavRow icon={<Desk />}>Masaüstü</NavRow>
        <NavRow icon={<Recent />}>Son gidilen yerler</NavRow>
        <div className="h-[21px]" />
        <NavRow top icon={<Pc />}>Bilgisayarim</NavRow>
        <NavRow sel icon={<FolderBelge />}>Belgeler</NavRow>
        <NavRow icon={<FolderDown />}>İndirilenler</NavRow>
        <NavRow icon={<FolderDesk />}>Masaüstü</NavRow>
        <NavRow icon={<FolderMusic />}>Müzikler</NavRow>
        <NavRow icon={<FolderPic />}>Resimler</NavRow>
        <NavRow icon={<FolderVideo />}>Videolar</NavRow>
        <NavRow icon={<DiskC />}>Yerel Disk (C:)</NavRow>
        <NavRow icon={<DiskD />}>Yeni Birim (D:)</NavRow>
        <div className="h-[21px]" />
        <NavRow top icon={<Net />}>Ağ</NavRow>
      </div>
      <div className="w-px bg-[#f0f0f0]" />
      <div className="flex-1">
        <div className="flex h-[31px] pl-[18px] leading-[26px] tracking-[-0.4px] text-[#4c607a]">
          <div className="w-[254px]">Ad</div>
          <ColSep />
          <div className="relative w-[119px] pl-[6px]">
            Değiştirme tarihi
            <Svg w={7} h={4} className="absolute top-0 left-[56px]"><path d="M0 0h7L3.500 4z" fill="#6fa3c0" /></Svg>
          </div>
          <ColSep />
          <div className="w-[119px] pl-[6px]">Tür</div>
          <ColSep />
          <div className="w-[79px] pl-[6px] tracking-[-0.2px]">Boyut</div>
          <ColSep />
        </div>
        {files.map(([Icon, name, date, type, size], i) => (
          <div key={name} className={`ml-[15px] flex h-[21px] w-[574px] items-center whitespace-nowrap text-[#6d6d6d] ${i === 5 ? "bg-[#f7f7f7] outline outline-[#dedede] -outline-offset-1" : ""}`}>
            <div className="w-[24px] pl-[4px]"><Icon /></div>
            <div className={`w-[240px] text-black ${name.length > 20 ? "tracking-[-0.4px]" : ""}`}>{name}</div>
            <div className="w-[120px]">{date}</div>
            <div className="w-[120px]">{type || "Dosya klasörü"}</div>
            <div className="w-[66px] text-right tracking-[-0.45px]">{size}</div>
          </div>
        ))}
        <div className="mt-[110px] ml-[63px] font-[Lato] text-[30px] leading-[40px] tracking-[0.05px] text-black">ZIP olarak kabul ediyo</div>
      </div>
    </div>
    <div className="flex h-[24px] items-center pl-[14px] whitespace-nowrap text-[#1e395b]">
      <div className="w-[45px]">21 öğe</div>
      <div className="h-[11px] w-px bg-[#eee]" />
      <div className="w-[85px] pl-[10px]">1 öğe seçildi</div>
      <div className="h-[11px] w-px bg-[#eee]" />
    </div>
  </div>
);

/* ---------- dialog ---------- */
const Chev = () => <Svg w={8} h={6}><path d="M.7 .8L4 4.200 7.300 .8" stroke="#555" strokeWidth="2" /></Svg>;
const Combo = ({ children, className, white }) => (
  <div className={`flex h-[21px] items-center justify-between border pr-[3px] pl-[3px] whitespace-nowrap ${white ? "border-[#abadb3] bg-white" : "border-[#acacac] bg-linear-to-b from-[#f0f0f0] to-[#e4e4e4]"} ${className}`}>
    <span>{children}</span><Chev />
  </div>
);
const Btn = ({ children, className, primary }) => (
  <div className={`flex h-[21px] items-center justify-center border bg-linear-to-b from-[#f0f0f0] to-[#e5e5e5] pt-px ${primary ? "border-[#3399ff]" : "border-[#acacac]"} ${className}`}>{children}</div>
);
const Tab = ({ children, className }) => (
  <div className={`h-[18px] border border-b-0 border-l-0 border-[#acacac] bg-linear-to-b from-[#f0f0f0] to-[#e6e6e6] text-center leading-[19px] whitespace-nowrap ${className}`}>{children}</div>
);
const Radio = ({ children, on, className }) => (
  <div className={`flex items-center gap-[2px] ${className}`}>
    <div className={`flex h-[13px] w-[13px] items-center justify-center rounded-full border bg-white ${on ? "border-[#3399ff]" : "border-[#707070]"}`}>
      {on && <div className="h-[7px] w-[7px] rounded-full bg-[#222]" />}
    </div>
    {children}
  </div>
);
const Check = ({ children, dim }) => (
  <div className={`flex h-[19.400px] items-center gap-[3px] whitespace-nowrap ${dim ? "text-[#838383]" : ""}`}>
    <div className={`h-[13px] w-[13px] border ${dim ? "border-[#bcbcbc] bg-[#e6e6e6]" : "border-[#707070] bg-white"}`} />
    {children}
  </div>
);
const Field = ({ title, className, children }) => (
  <div className={className}>
    <div className="flex h-px items-center">
      <div className="h-px w-[7px] bg-[#dcdcdc]" /><span className="px-[2px] pt-[2px] leading-none whitespace-nowrap">{title}</span><div className="h-px flex-1 bg-[#dcdcdc]" />
    </div>
    <div className="h-[calc(100%-1px)] border border-t-0 border-[#dcdcdc]">{children}</div>
  </div>
);

const Dialog = () => (
  <div className="absolute top-[323px] left-[789px] flex h-[433px] w-[468px] flex-col bg-black px-[8px] font-['DejaVu_Sans_Condensed','DejaVu_Sans',sans-serif] text-[11px] tracking-[-0.28px] text-black shadow-[0_0_6px_rgba(0,0,0,0.25)]">
    <div className="flex h-[31px] pl-[2px]">
      <div className="mt-[7px]"><Rar /></div>
      <div className="flex-1 pl-[38px] text-center font-['Noto_Sans',sans-serif] text-[15px] leading-[31px] tracking-[-0.42px] whitespace-nowrap text-[#262626]">Arşiv adı ve parametreleri</div>
      <div className="w-[17px] text-[13px] leading-[22px] font-bold text-[#2e2e2e]">?</div>
      <div className="mt-px mr-[-1px] flex h-[20px] w-[45px] items-center justify-center bg-[#c75050]"><Svg w={8} h={8}><path d="M.5 .5l7 7M7.500 .5l-7 7" stroke="#fff" strokeWidth="1.700" /></Svg></div>
    </div>
    <div className="h-[394px] bg-[#f0f0f0] pt-[7px] pl-[6px]">
      <div className="flex h-[20px] items-end tracking-[-0.4px]">
        <div className="relative z-10 mb-[-1px] h-[21px] w-[46px] border border-b-0 border-[#acacac] bg-white pr-[3px] text-center leading-[18px]">Genel</div>
        <Tab className="w-[48px]">Gelişmiş</Tab>
        <Tab className="w-[66px]">Seçenekler</Tab>
        <Tab className="w-[53px]">Dosyalar</Tab>
        <Tab className="w-[66px]">Yedekleme</Tab>
        <Tab className="w-[45px]">Zaman</Tab>
        <Tab className="w-[53px]">Açıklama</Tab>
      </div>
      <div className="h-[330px] w-[438px] border border-[#acacac] bg-white pt-[9px] pl-[18px]">
        <div className="flex h-[25px] w-[404px] justify-between"><div className="pt-[6px] leading-[18px]">Arşiv adı</div><Btn className="mr-px w-[73px]">Gözat...</Btn></div>
        <Combo white className="w-[404px] pl-[5px]">WebApplication1.zip</Combo>
        <div className="flex">
          <div className="w-[185px]">
            <Btn className="mt-[23px] ml-px w-[166px]">Profiller...</Btn>
            <Field title="Arşiv biçimi" className="mt-[22px] h-[41px] w-[168px]">
              <div className="flex h-[42px] items-center pl-[8px]">
                <Radio className="w-[53px]">RAR</Radio><Radio className="w-[55px]">RAR5</Radio><Radio on>ZIP</Radio>
              </div>
            </Field>
            <div className="mt-[8px] h-[18px] leading-[19px]">Sıkıştırma yöntemi</div>
            <Combo className="w-[168px]">Normal</Combo>
            <div className="mt-[8px] h-[18px] leading-[19px]">Sözlük boyutu</div>
            <Combo className="w-[168px]">32 KB</Combo>
            <div className="mt-[8px] h-[18px] leading-[19px]">Ciltlere böl, boyut</div>
            <div className="flex gap-[3px]"><Combo white className="w-[120px]"></Combo><Combo className="w-[45px]">B</Combo></div>
          </div>
          <div className="w-[219px]">
            <div className="mt-[6px] h-[16px] leading-[19px]">Güncelleme modu</div>
            <Combo className="w-[219px]">Dosyaları ekle ve değiştir</Combo>
            <Field title="Arşivleme seçenekleri" className="mt-[23px] h-[137px] w-[219px]">
              <div className="pt-[11px] pl-[9px]">
                <Check>Arşivledikten sonra dosyaları sil</Check>
                <Check>SFX arşivi oluştur</Check>
                <Check dim>Katı arşiv oluştur</Check>
                <Check dim>Kurtarma kaydı ekle</Check>
                <Check>Arşivlenen dosyaları test et</Check>
                <Check dim>Arşivi kilitle</Check>
              </div>
            </Field>
            <Btn className="mt-[24px] ml-px w-[217px]">Parola seç...</Btn>
          </div>
        </div>
      </div>
      <div className="mt-[8px] flex justify-end gap-[8px] pr-[7px]">
        <Btn primary className="w-[73px]">Tamam</Btn><Btn className="w-[73px]">İptal</Btn><Btn className="w-[73px]">Yardım</Btn>
      </div>
    </div>
  </div>
);

/* ---------- dock ---------- */
const Tile = ({ children }) => (
  <div className="flex h-[48px] w-[48px] items-center justify-center border-t border-l border-[#777] bg-black">{children}</div>
);
const Office = ({ l, children }) => (
  <div className="flex items-center">
    <div className="flex h-[36px] w-[23px] items-center justify-center bg-white font-['Noto_Sans'] text-[15px] font-bold tracking-normal text-black [clip-path:polygon(0_9%,100%_0,100%_100%,0_91%)]">{l}</div>
    <Svg w={16} h={26}>{children}</Svg>
  </div>
);
const dockIcons = [
  <Svg w={38}><circle cx="19" cy="19" r="18.500" fill="#fff" /><circle cx="19" cy="19" r="7.500" stroke="#000" strokeWidth="1.300" /><path d="M19 11h17M12 22L4 9M26 22l-8 15" stroke="#555" /></Svg>,
  <Svg w={38}><circle cx="19" cy="20" r="17" fill="#7a7a7a" /><path d="M2 7l2-2 3 4c2-1 5-1 6 0l3-2c0 3-1 4-3 5 3 2 5 3 4 4l-6 3c1 4 5 5 9 4 4 0 8-3 9-7 0-5-1-8-3-10 4 0 6 3 7 6 2-1 3 0 3 2 2 4 2 9 0 13C33 33 26 38 18 38 8 37 1 31 0 21c0-5 1-9 2-14z" fill="#fff" /></Svg>,
  <Svg w={36} h={38}><ellipse cx="18" cy="19" rx="17.500" ry="18.500" fill="#fff" /><ellipse cx="18" cy="19" rx="7" ry="14.500" fill="#000" /></Svg>,
  <Svg w={38} h={26}><g transform="rotate(-12 19 14)"><path d="M9 12c0-6 6-11 11-11s10 5 10 11c-3 3-18 3-21 0z" fill="#fff" /><ellipse cx="19" cy="16" rx="17.500" ry="7" fill="#000" stroke="#fff" strokeWidth="1.600" /><path d="M9 10c4 3 16 3 21 0l-2-4H11z" fill="#fff" /><ellipse cx="20" cy="19" rx="11" ry="3" stroke="#fff" strokeWidth="1.600" /></g><path d="M11 8l14-5" stroke="#000" strokeWidth="1.500" strokeDasharray="2 2" /></Svg>,
  <Svg w={38} h={32}><path d="M12 1l25 2-2 21-5 1c1 4-4 6-8 6-5 0-8-2-9-5L1 27V13l11-1z" fill="#fff" /><path d="M2 26l13-4-3 4" stroke="#000" strokeWidth="1.500" /></Svg>,
  <Svg w={38} h={38}><path d="M27 0l10 4.500v29L27 38 13 24.500 4 31l-4-2V9l4-2 9 6.500zM27.500 12L18 19l9.500 7.500zM4.500 14v10.500l5-5.500z" fill="#fff" fillRule="evenodd" /></Svg>,
  <div className="flex h-[38px] w-[38px] items-center justify-center border-3 border-white font-['Open_Sans'] text-[18px] font-semibold tracking-normal text-white">Ps</div>,
  <Svg w={26} h={38}><rect width="26" height="38" rx="4" fill="#fff" /><rect x="3" y="4" width="20" height="7" fill="#000" />{[18, 25, 32].map((y) => [6, 13, 20].map((x) => <circle key={`${x}-${y}`} cx={x} cy={y} r="2.300" fill="#000" />))}</Svg>,
  <Svg w={38} h={28}><path d="M0 6.500C0 5 1 4.500 2 4.500h17L21 1c0-1 1-1 2-1h10c2 0 2 1 2 4.500h1c1 0 2 1 2 2V24c0 1-1 2-2 2H2c-1 0-2-1-2-2z" fill="#fff" /><path d="M21 3.500h14" stroke="#000" /></Svg>,
  <Office l="A"><path d="M0 2c8-3 15-1 15 2v18c0 3-8 5-15 3z" fill="#fff" /><path d="M0 9c7 2 13 0 15-2M0 14.500c7 2 13 0 15-2M0 20c7 2 13 0 15-2" stroke="#000" strokeWidth="1.200" /></Office>,
  <Office l="W"><rect width="15" height="26" fill="#fff" /><path d="M0 4.500h12M0 8.500h12M0 12.500h12M0 16.500h12M0 20.500h12" stroke="#000" strokeWidth="1.500" /></Office>,
  <Office l="P"><path d="M3 1h12v18h-2V3H3z" fill="#fff" /><path d="M0 4h12v20H0z" fill="#fff" /><circle cx="5" cy="10" r="4" fill="#000" /><path d="M5 10V6a4 4 0 0 1 4 4z" fill="#fff" /><path d="M0 17h9M0 20.500h9" stroke="#000" strokeWidth="1.500" /></Office>,
  <Office l="X"><rect width="15" height="26" fill="#fff" /><path d="M0 5h13M0 9h13M0 13h13M0 17h13M0 21h13M4 2v22M9 2v22" stroke="#000" strokeWidth="1.300" /></Office>,
  <Svg w={38}><circle cx="19" cy="19" r="18" stroke="#fff" strokeWidth="1.600" /><path d="M6 12l7-2 4 12c1 3 5 2 5-1l-4-12 6-1 5 14c1 2 3 2 5 0l-1 5c-3 3-6 3-9 0-1 3-3 4-6 3l3 7-7-1z" fill="#fff" /></Svg>,
  <Svg w={38}><circle cx="19" cy="19" r="17.500" stroke="#fff" strokeWidth="2" /><path d="M14 11l13 8-13 8z" fill="#fff" /></Svg>,
  <Svg w={38} h={28}><path d="M0 6.500C0 5 1 4.500 2 4.500h17L21 1c0-1 1-1 2-1h10c2 0 2 1 2 4.500h1c1 0 2 1 2 2V24c0 1-1 2-2 2H2c-1 0-2-1-2-2z" fill="#fff" /><path d="M21 3.500h14" stroke="#000" /><path d="M17 8h5v7h3.500l-6 7-6-7H17z" fill="#000" /></Svg>,
  <Svg w={38} h={36}><ellipse cx="21" cy="22" rx="16" ry="13.500" fill="#fff" /><circle cx="4.500" cy="10" r="4.300" fill="#fff" /><ellipse cx="12" cy="5.500" rx="2.800" ry="3.500" fill="#fff" /><ellipse cx="18" cy="4" rx="2.200" ry="3.200" fill="#fff" /><ellipse cx="23.500" cy="4" rx="2" ry="2.900" fill="#fff" /><ellipse cx="28.500" cy="5" rx="1.700" ry="2.400" fill="#fff" /></Svg>,
  <Svg w={34} h={38}><path d="M14 3c1-4 5-4 6 0l1 3c-2 1.500-6 1.500-8 0z" fill="#fff" /><path d="M11.500 12c3 2 8 2 11 0l3 9c-4 3-13 3-17 0z" fill="#fff" /><path d="M4 25h3c3 4 17 4 20 0h3l4 13H0z" fill="#fff" /></Svg>,
  <Svg w={38}><rect width="38" height="38" rx="1" fill="#fff" /><circle cx="19" cy="19" r="16" fill="#000" /><path d="M5 19l7-6v4h14v-4l7 6-7 6v-4H12v4z" fill="#fff" /></Svg>,
  <Svg w={38}><circle cx="19" cy="19" r="13" stroke="#fff" strokeWidth="4" /><circle cx="19" cy="19" r="16.500" stroke="#fff" strokeWidth="5" strokeDasharray="6.480 6.480" strokeDashoffset="3.240" /></Svg>,
];

const Dock = () => (
  <div className="absolute top-[1030px] left-[504px] flex h-[50px] items-start">
    {dockIcons.map((ic, i) => <Tile key={i}>{ic}</Tile>)}
    <div className="mt-[2px] ml-[2px] flex h-[45px] w-[45px] items-center justify-center bg-black">
      <Svg w={24} h={24}><path d="M1 22c0-3 8-7 16-7 6 0 7 3 4 3-4 0-10-7-10-14 0-4 3-3 2 1C12 11 6 21 3 23c-1 .5-2 0-2-1z" stroke="#f3e4e2" strokeWidth="1.400" /></Svg>
    </div>
    <Svg w={30} h={42} className="mt-[4px] ml-[11px]"><path d="M15 5c-3-1-2-3 1-5C6 2 0 10 0 20c0 9 6 15 15 15 2 1 1 4 0 6 10-4 15-12 15-21 0-9-7-15-15-15z" fill="#3b3b3b" /><circle cx="15" cy="20" r="6" fill="#fff" /></Svg>
    <Svg w={44} h={24} className="mt-[13px] ml-[10px]"><path d="M0 6C10 1 22 3 33 12c-11-6-21-8-33-6z" fill="#555" /><path d="M12 4c9-1 15 3 20 8L20 21c8-6 7-10 3-13-3-2-6-3-11-4z" fill="#333" /><path d="M20 2c9 0 17 4 24 10-6 0-9 4-17 9l8-9C31 6 27 3 20 2z" fill="#222" /></Svg>
    <div className="ml-[2px] flex h-[48px] w-[48px] items-center justify-center bg-[#211d1e] text-white"><FaGithub size={43} /></div>
    <div className="mt-[6px] ml-[6px] flex h-[36px] w-[36px] items-center justify-center rounded-[3px] bg-[#424242] font-['Noto_Sans'] text-[21px] font-semibold tracking-normal text-[#eee]">C</div>
    <Svg w={43} h={26} className="mt-[11px] ml-[9px]"><path d="M10 22H5C-1 21-1 13 5 12c0-6 6-8 9-6 4-7 14-7 17 1-6-2-10 1-12 4-6 0-9 5-9 11z" fill="#0f7ad6" /><path d="M15 25c-6-1-6-9 0-11 1-7 12-8 15-2 5-1 7 2 7 5 7 0 8 8 1 8z" fill="#0f7ad6" stroke="#fff" strokeWidth="1.200" /></Svg>
    <div className="ml-[2px] grid h-[48px] w-[48px] grid-cols-2 gap-[2px] bg-[#e9e9d8]"><div className="bg-[#f25022]" /><div className="bg-[#7fba00]" /><div className="bg-[#00a4ef]" /><div className="bg-[#ffb900]" /></div>
    <div className="flex h-[48px] w-[48px] items-center justify-center bg-[#2980b9] pb-[2px] font-['Noto_Sans'] text-[20px] font-bold tracking-[-0.5px] text-white">&lt;B&gt;</div>
    <div className="flex h-[50px] w-[48px] flex-col items-center bg-[#fdfdfd]">
      <div className="mt-[6px] h-[40px] -rotate-[38deg] font-['Liberation_Serif'] text-[27px] leading-[40px] font-bold tracking-[0.5px] text-[#4f7fdc] italic">Gazi</div>
      <div className="ml-[22px] mt-[2px] h-[2px] w-[22px] shrink-0 bg-[#2c9fdc]" />
    </div>
    <Svg w={14} h={12} className="mt-[31px] ml-[2px]"><rect x=".5" y=".5" width="13" height="11" fill="#fff" stroke="#8a9bab" /><rect x="2" y="2" width="10" height="8" fill="#6fb4ea" /><path d="M2 10V8c3-2 6-1 10-2v4z" fill="#2f6b52" /></Svg>
  </div>
);

export default function App() {
  return (
    <div className="relative flex h-[1080px] w-[1920px] overflow-hidden bg-white font-['Noto_Sans',sans-serif] text-[12px] leading-[16px] tracking-[-0.3px]">
      <Taskbar />
      <Explorer />
      <Dialog />
      <Dock />
    </div>
  );
}
